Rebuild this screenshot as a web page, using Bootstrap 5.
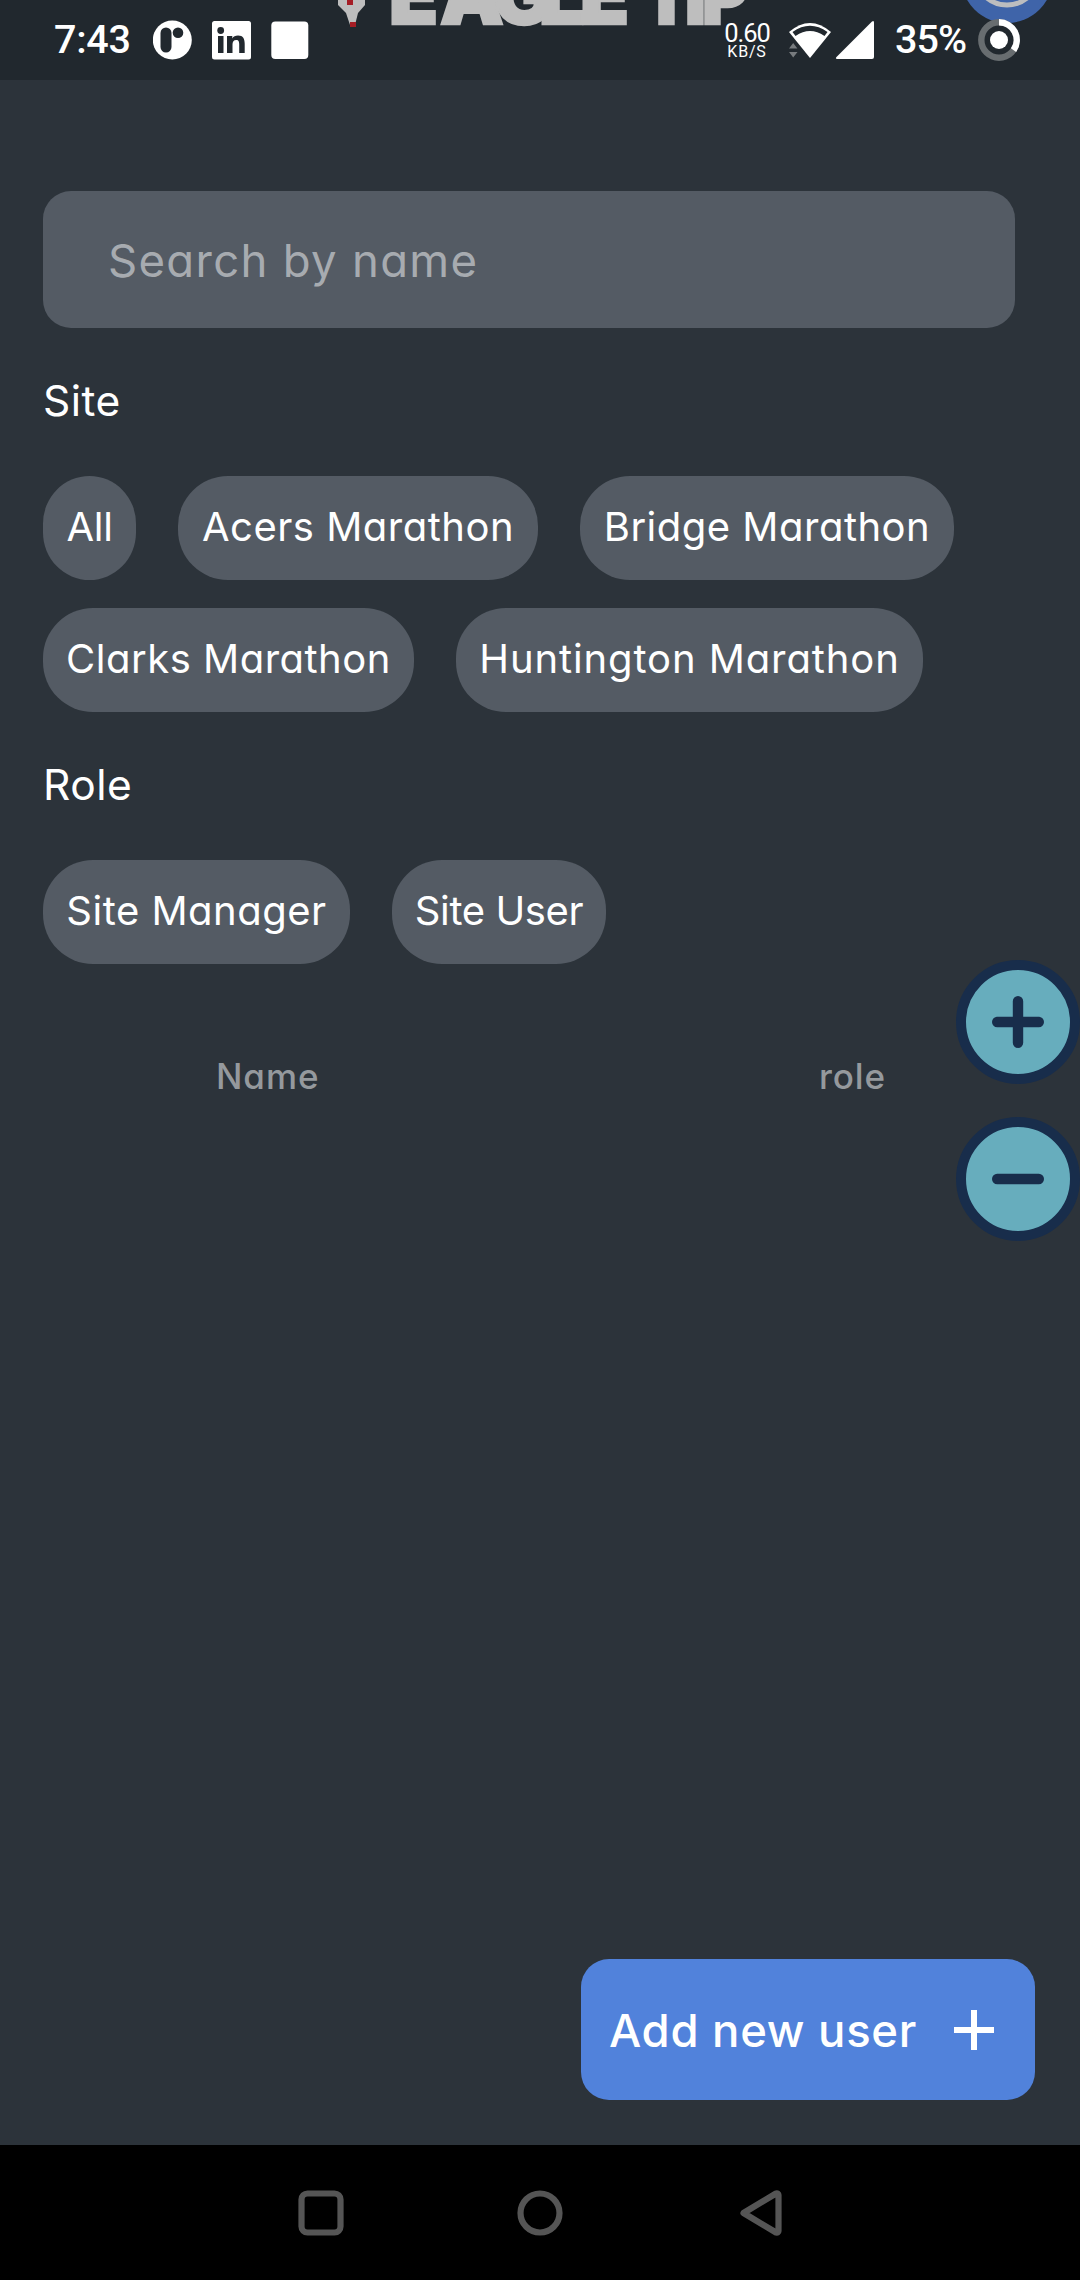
<!DOCTYPE html>
<html lang="en">
<head>
<meta charset="utf-8">
<meta name="viewport" content="width=device-width, initial-scale=1">
<title>Users</title>
<link href="https://cdn.jsdelivr.net/npm/bootstrap@5.3.0/dist/css/bootstrap.min.css" rel="stylesheet">
<style>
  body { background: #2c333a; font-family: Inter, "Open Sans", sans-serif; font-feature-settings: "cv11"; color: #fff; }
  button, input, input::placeholder { font-feature-settings: "cv11"; }
  .screen { width: 1080px; height: 2280px; }
  .statusbar { height: 80px; background: #21282e; font-family: Roboto, sans-serif; font-weight: 500; font-size: 39.5px; line-height: 80px; padding-left: 54px; }
  .status-art { inset: 0 0 auto 0; z-index: 0; }
  .clock { width: 99px; letter-spacing: -.3px; }
  .rate { width: 48px; margin-left: 413px; margin-right: 3px; font-weight: 400; line-height: 1; padding-top: 21px; }
  .rate-num { font-size: 25.5px; line-height: 25px; letter-spacing: -1px; }
  .rate-unit { font-size: 16px; line-height: 12px; letter-spacing: .8px; }
  .pct { width: 80px; letter-spacing: -1px; }
  .content { padding: 111px 43px 0; }
  .search-field, .search-field:focus { width: 972px; height: 137px; border: 0; border-radius: 28px; background: #545b64; color: #fff; font-size: 45.5px; padding: 2px 65px 0; box-shadow: none; letter-spacing: 1.3px; }
  .search-field::placeholder { color: #a7abb0; opacity: 1; }
  .group-title { font-size: 42.5px; font-weight: 400; line-height: 50px; margin: 48px 0 50px; letter-spacing: .5px; }
  .chips { column-gap: 42px; row-gap: 28px; }
  .chip, .chip:hover { height: 104px; border: 0; border-radius: 50px; background: #545b64; color: #fff; font-size: 40px; line-height: 50px; padding: 0 0 3px; white-space: nowrap; letter-spacing: .5px; }
  .chip.c-all { width: 93px; border-radius: 47px / 48px; letter-spacing: -.3px; } .c-acers { width: 360px; } .c-bridge { width: 374px; }
  .c-clarks { width: 371px; } .chip.c-hunt { width: 467px; letter-spacing: .9px; } .c-manager { width: 307px; } .chip.c-user { width: 214px; letter-spacing: -.4px; }
  .list-head { color: #95999d; font-size: 35px; font-weight: 500; line-height: 40px; margin-top: 92px; padding-left: 173px; padding-right: 151px; letter-spacing: .9px; }
  .zoomers { right: 0; top: 960px; gap: 33px; z-index: 3; }
  .round-btn { width: 124px; height: 124px; border: 10.5px solid #182d4b; background: #67adbd; }
  .add-btn, .add-btn:hover { width: 454px; height: 141px; border: 0; border-radius: 28px; background: #5182db; color: #fff; font-size: 45.5px; font-weight: 500; padding: 0 41px 0 28px; margin: 0 45px 45px auto; letter-spacing: .7px; }
  .add-label { padding-top: 3px; }
  .sysnav { height: 135px; background: #000; }
</style>
</head>
<body>
<div class="screen d-flex flex-column position-relative overflow-hidden mx-auto">
  <header class="statusbar d-flex position-relative flex-shrink-0">
    <svg class="status-art position-absolute" width="1080" height="80" viewBox="0 0 1080 80">
      <path d="M338 0v5l8 8 4 12h5l3-12 7-8V0z" fill="#bebebe"/>
      <path d="M347 0h6v5h-6zM350 22h6v5h-6z" fill="#a51d25"/>
      <g fill="#bebebe" stroke="#bebebe" stroke-width="2.500" font-family="Inter, sans-serif" font-weight="900" font-size="80">
        <text y="23.500" x="389 440 493 539 580">EAGLE</text>
        <text y="23.500" x="713 761 780" transform="scale(.9 1)">TIP</text>
      </g>
      <circle cx="1007" cy="-23" r="46" fill="#3f64a9"/>
      <circle cx="1007" cy="-27" r="32" fill="none" stroke="#bcbdbf" stroke-width="5"/>
    </svg>
    <div class="clock position-relative">7:43</div>
    <svg class="position-relative" width="157" height="80" viewBox="153 0 157 80">
      <circle cx="172.300" cy="40" r="19.500" fill="#fff"/>
      <rect x="160.500" y="27.500" width="11" height="25" rx="5.500" fill="#21282e"/><circle cx="178" cy="32.700" r="5.300" fill="#21282e"/>
      <rect x="212" y="21" width="39" height="38.500" rx="2.500" fill="#fff"/>
      <g fill="#21282e"><circle cx="220.700" cy="30.500" r="3.400"/><path d="M218 36h5.500v17H218zM227 36h5.300v2.400c1.200-2 3-2.900 5.700-2.900 5.200 0 6.700 3.300 6.700 8.300V53h-5.500v-8.500c0-2.500-.4-4.400-3-4.400s-3.700 1.900-3.700 4.400V53H227z"/></g>
      <rect x="271.300" y="21.500" width="37" height="37.500" rx="4" fill="#fff"/>
    </svg>
    <div class="rate position-relative text-center"><div class="rate-num">0.60</div><div class="rate-unit">KB/S</div></div>
    <svg class="position-relative" width="121" height="80" viewBox="774 0 121 80">
      <path d="M789 32q21-18 42 0l-21 26z" fill="#fff"/>
      <path d="M792.500 32q17.500-12.500 35 0l-3 4q-14.500-10-29 0z" fill="#21282e"/>
      <path d="M789 48.500l4.200-5.500 4.200 5.500zM789 52h8.500l-4.300 5.500z" fill="#777b7e"/>
      <path d="M837 59q-2-.3-.5-2L872 21.500q2-1.500 2 1V57q0 2-2 2z" fill="#fff"/>
    </svg>
    <div class="pct position-relative">35%</div>
    <svg class="position-relative" width="48" height="80" viewBox="975 0 48 80">
      <circle cx="999" cy="40" r="17.700" fill="none" stroke="#686d70" stroke-width="6.400"/>
      <path d="M999 22.300A17.700 17.700 0 0 1 1013.500 50.200" fill="none" stroke="#fff" stroke-width="6.400"/>
      <circle cx="999" cy="40" r="9" fill="#fff"/>
    </svg>
  </header>

  <main class="content flex-grow-1 d-flex flex-column align-items-start">
    <input class="form-control search-field" type="text" placeholder="Search by name">
    <h2 class="group-title">Site</h2>
    <div class="chips d-flex flex-wrap">
      <button class="btn chip c-all">All</button>
      <button class="btn chip c-acers">Acers Marathon</button>
      <button class="btn chip c-bridge">Bridge Marathon</button>
      <button class="btn chip c-clarks">Clarks Marathon</button>
      <button class="btn chip c-hunt">Huntington Marathon</button>
    </div>
    <h2 class="group-title">Role</h2>
    <div class="chips d-flex flex-wrap">
      <button class="btn chip c-manager">Site Manager</button>
      <button class="btn chip c-user">Site User</button>
    </div>
    <div class="list-head d-flex justify-content-between w-100"><span>Name</span><span>role</span></div>
  </main>

  <div class="zoomers position-absolute d-flex flex-column">
    <div class="round-btn rounded-circle d-flex align-items-center justify-content-center">
      <svg width="52" height="52" viewBox="0 0 52 52" stroke="#182d4b" stroke-width="10.400" stroke-linecap="round"><path d="M5.200 26h41.600M26 5.200v41.600"/></svg>
    </div>
    <div class="round-btn rounded-circle d-flex align-items-center justify-content-center">
      <svg width="52" height="52" viewBox="0 0 52 52" stroke="#182d4b" stroke-width="10.400" stroke-linecap="round"><path d="M5.200 26h41.600"/></svg>
    </div>
  </div>

  <button class="btn add-btn d-flex align-items-center justify-content-between flex-shrink-0"><span class="add-label">Add new user</span>
    <svg width="40" height="40" viewBox="0 0 40 40" stroke="#fff" stroke-width="6"><path d="M0 20h40M20 0v40"/></svg>
  </button>

  <nav class="sysnav flex-shrink-0">
    <svg width="1080" height="135" viewBox="0 0 1080 135" fill="none" stroke="#555" stroke-width="6.200" stroke-linejoin="round">
      <rect x="301.500" y="48.500" width="39" height="39" rx="6"/>
      <circle cx="540" cy="68" r="19.500"/>
      <path d="M743.500 68L776 48.500Q778.500 48 778.500 50V86Q778.500 88 776 87.500z"/>
    </svg>
  </nav>
</div>
<script src="https://cdn.jsdelivr.net/npm/bootstrap@5.3.0/dist/js/bootstrap.bundle.min.js"></script>
</body>
</html>
